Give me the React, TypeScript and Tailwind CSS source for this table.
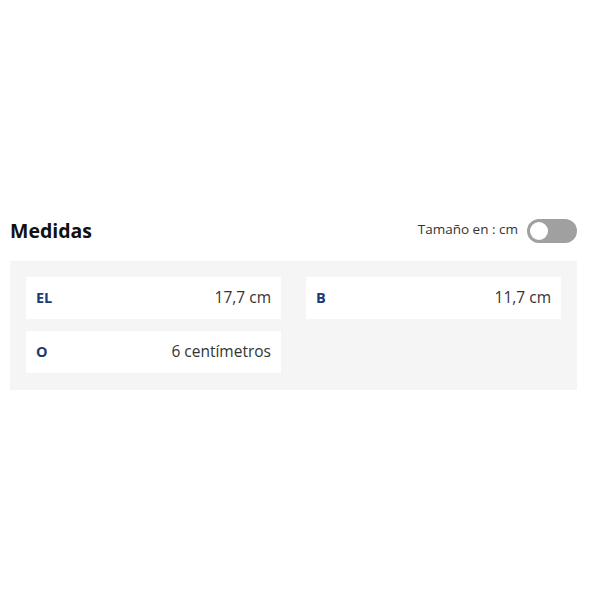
const rows = [
  { label: "EL", value: "17,7 cm" },
  { label: "B", value: "11,7 cm" },
  { label: "O", value: "6 centímetros" },
];

export default function App() {
  return (
    <div className="w-[600px] h-[600px] bg-white font-['Open_Sans',sans-serif]">
      <section className="pt-[218px] pl-[10px] pr-[23px]">
        <div className="flex flex-row items-center justify-between h-[26px]">
          <h2 className="text-[19.5px] font-bold text-[#111]">Medidas</h2>
          <div className="flex flex-row items-center gap-[9px]">
            <span className="text-[13.5px] text-[#333] pb-[3px]">Tamaño en : cm</span>
            <button className="relative w-[50px] h-[24px] rounded-full bg-[#a0a0a0]">
              <span className="absolute left-[3px] top-[3px] w-[18px] h-[18px] rounded-full bg-white" />
            </button>
          </div>
        </div>
        <div className="mt-[17px] bg-[#f5f5f5] pt-4 px-4 pb-[17px] grid grid-cols-2 gap-x-[25px] gap-y-[12px]">
          {rows.map((r) => (
            <div
              key={r.label}
              className="flex flex-row items-center justify-between h-[42px] bg-white px-[10px]"
            >
              <span className="text-[14.5px] leading-none font-bold text-[#1c3a74]">{r.label}</span>
              <span className="text-[15.5px] leading-none text-[#333]">{r.value}</span>
            </div>
          ))}
        </div>
      </section>
    </div>
  );
}
